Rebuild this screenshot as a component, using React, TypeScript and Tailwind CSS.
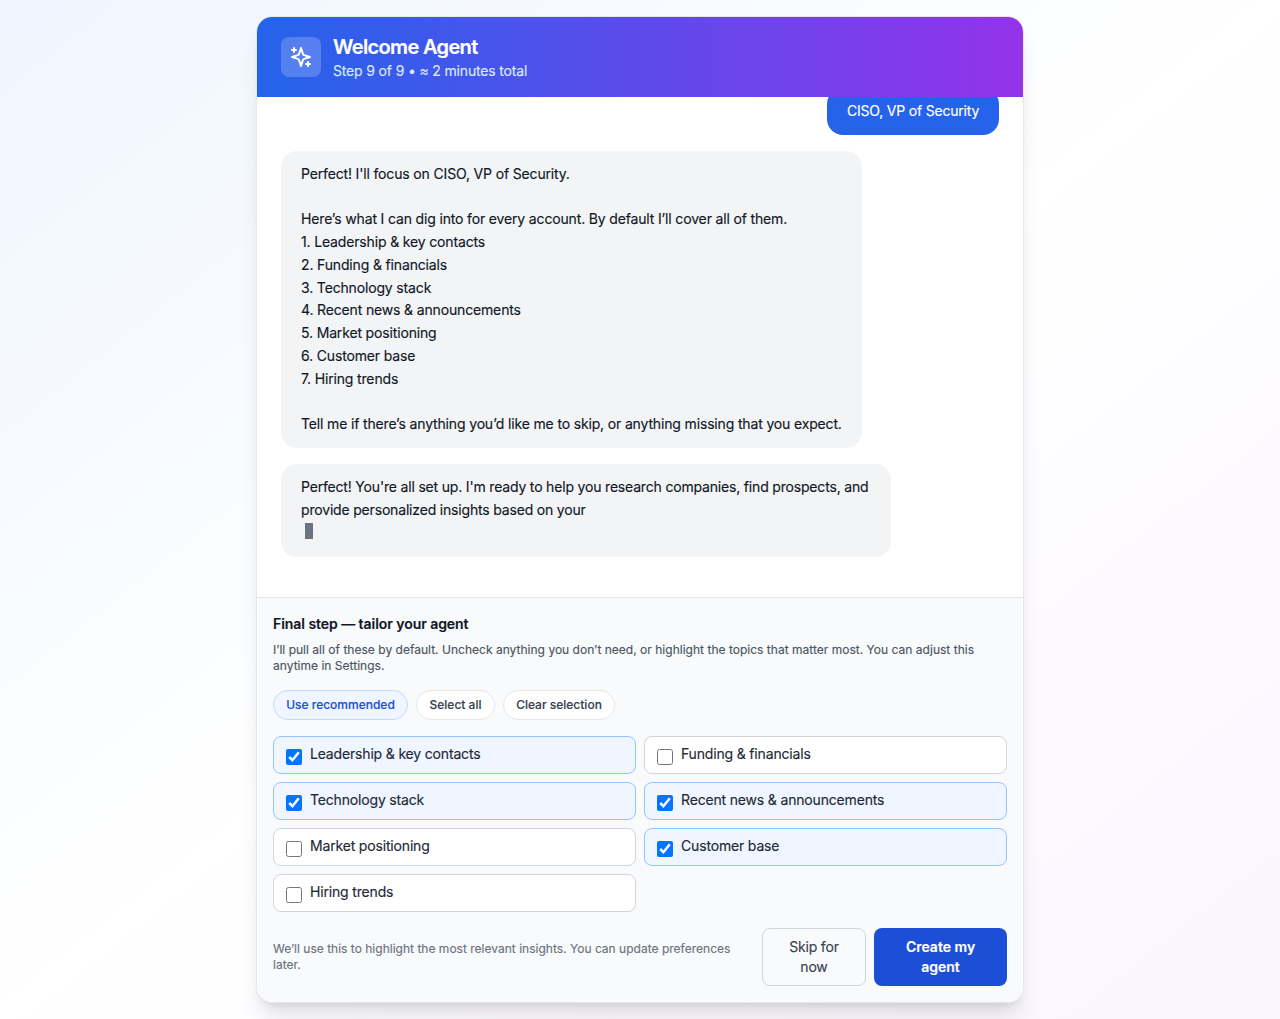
const topics = [
  { label: "Leadership & key contacts", checked: true },
  { label: "Funding & financials", checked: false },
  { label: "Technology stack", checked: true },
  { label: "Recent news & announcements", checked: true },
  { label: "Market positioning", checked: false },
  { label: "Customer base", checked: true },
  { label: "Hiring trends", checked: false },
];

const overview = `Perfect! I'll focus on CISO, VP of Security.

Here’s what I can dig into for every account. By default I’ll cover all of them.
1. Leadership & key contacts
2. Funding & financials
3. Technology stack
4. Recent news & announcements
5. Market positioning
6. Customer base
7. Hiring trends

Tell me if there’s anything you’d like me to skip, or anything missing that you expect.`;

function SparklesIcon() {
  return (
    <svg className="size-6" viewBox="0 0 24 24" fill="none" stroke="currentColor" strokeWidth="2" strokeLinecap="round" strokeLinejoin="round">
      <path d="m12 3-1.912 5.813a2 2 0 0 1-1.275 1.275L3 12l5.813 1.912a2 2 0 0 1 1.275 1.275L12 21l1.912-5.813a2 2 0 0 1 1.275-1.275L21 12l-5.813-1.912a2 2 0 0 1-1.275-1.275L12 3Z" />
      <path d="M5 3v4" />
      <path d="M19 17v4" />
      <path d="M3 5h4" />
      <path d="M17 19h4" />
    </svg>
  );
}

function Header() {
  return (
    <header className="flex h-20 shrink-0 items-center gap-3 bg-[linear-gradient(to_right,#2563eb,#9333ea)] px-6 text-white">
      <div className="flex size-10 items-center justify-center rounded-lg bg-white/20">
        <SparklesIcon />
      </div>
      <div>
        <h1 className="text-xl leading-7 font-semibold tracking-[-0.65px] [-webkit-text-stroke:0.2px]">Welcome Agent</h1>
        <p className="text-sm tracking-[-0.16px] text-[#dbeafe]">Step 9 of 9 • ≈ 2 minutes total</p>
      </div>
    </header>
  );
}

function Messages() {
  return (
    <div className="flex min-h-0 flex-1 flex-col justify-end gap-4 overflow-hidden px-6 pb-10 text-sm leading-[22.75px]">
      <div className="w-[172px] shrink-0 self-end rounded-2xl bg-[#2563eb] px-5 py-3 tracking-[-0.2px] whitespace-nowrap text-white">
        CISO, VP of Security
      </div>
      <div className="w-[581px] shrink-0 rounded-2xl bg-[#f3f4f6] px-5 py-3 tracking-[-0.155px] whitespace-pre text-[#111827]">
        {overview}
      </div>
      <div className="w-[610px] shrink-0 rounded-2xl bg-[#f3f4f6] px-5 py-3 tracking-[-0.18px] text-[#111827]">
        <p className="whitespace-pre">
          {"Perfect! You're all set up. I'm ready to help you research companies, find prospects, and\nprovide personalized insights based on your"}
        </p>
        <div className="h-[23.75px] pt-[1.75px]">
          <span className="ml-1 block h-4 w-2 bg-[#6b7280]" />
        </div>
      </div>
    </div>
  );
}

function Preferences() {
  return (
    <section className="shrink-0 border-t border-[#e5e7eb] bg-[#f9fafb] p-4">
      <h2 className="text-sm font-semibold tracking-[-0.05px] text-[#111827]">Final step — tailor your agent</h2>
      <p className="mt-2 text-xs tracking-[0.018px] text-[#4b5563]">
        I’ll pull all of these by default. Uncheck anything you don’t need, or highlight the topics that matter most. You can adjust this
        <br />
        anytime in Settings.
      </p>
      <div className="mt-4 flex gap-2 text-xs font-medium whitespace-nowrap text-[#374151]">
        <button className="h-[30px] w-[135px] rounded-full border border-[#bfdbfe] bg-[#eff6ff] text-[#1d4ed8]">Use recommended</button>
        <button className="h-[30px] w-[79px] rounded-full border border-[#e5e7eb] bg-white">Select all</button>
        <button className="h-[30px] w-[112px] rounded-full border border-[#e5e7eb] bg-white">Clear selection</button>
      </div>
      <div className="mt-4 grid grid-cols-2 gap-2">
        {topics.map((t) => (
          <label
            key={t.label}
            className={`flex items-start gap-2 rounded-lg border px-3 py-2 text-sm text-[#1f2937] ${
              t.checked ? "border-[#93c5fd] bg-[#eff6ff]" : "border-[#d1d5db] bg-white"
            }`}
          >
            <input type="checkbox" defaultChecked={t.checked} className="mt-1 size-4" />
            <span className="h-5 -translate-y-px tracking-[-0.17px]">{t.label}</span>
          </label>
        ))}
      </div>
      <div className="mt-4 flex items-center justify-between">
        <p className="text-xs tracking-[0.012px] text-[#6b7280]">
          We’ll use this to highlight the most relevant insights. You can update preferences
          <br />
          later.
        </p>
        <div className="flex shrink-0 gap-2 text-sm">
          <button className="h-[58px] w-[104px] rounded-lg border border-[#d1d5db] tracking-[-0.2px] text-[#374151]">
            Skip for
            <br />
            now
          </button>
          <button className="h-[58px] w-[133px] rounded-lg bg-[#1d4ed8] font-semibold text-white">
            Create my
            <br />
            agent
          </button>
        </div>
      </div>
    </section>
  );
}

export default function App() {
  return (
    <main className="flex h-[1019px] justify-center bg-[linear-gradient(to_bottom_right,#eff6ff,#ffffff,#faf5ff)] p-4 font-['Inter',sans-serif] [-webkit-text-stroke:0.15px]">
      <div className="flex w-3xl flex-col overflow-hidden rounded-2xl border border-[#e5e7eb] bg-white shadow-xl">
        <Header />
        <Messages />
        <Preferences />
      </div>
    </main>
  );
}
